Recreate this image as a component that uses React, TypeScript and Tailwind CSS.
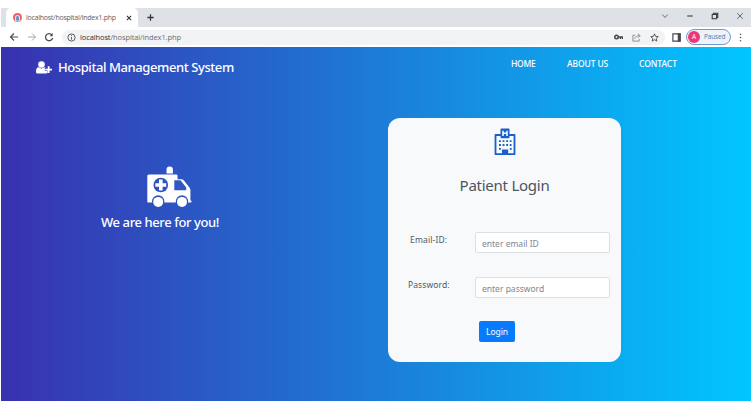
import type { ReactNode } from "react";

const chromeFont = "font-['Open_Sans','Noto_Sans',sans-serif]";
const pageFont = "font-['Noto_Sans','Open_Sans',sans-serif]";

function Favicon() {
  return (
    <svg className="size-[9px] shrink-0" viewBox="0 0 18 18">
      <circle cx="9" cy="9" r="9" fill="#ed5f61" />
      <path d="M4 15V9a5 5 0 0 1 10 0v6l-3 2H7z" fill="#dbe8f5" />
      <path d="M6 15V9a3 3 0 0 1 6 0v6z" fill="#6a9cca" />
      <path d="M9 6v9" stroke="#e05a61" strokeWidth="2" />
    </svg>
  );
}

function Stroke({ children, className, color = "#4b4f54", width = 1 }: { children: ReactNode; className: string; color?: string; width?: number }) {
  return (
    <svg className={`shrink-0 ${className}`} viewBox="0 0 10 10" fill="none" stroke={color} strokeWidth={width}>
      {children}
    </svg>
  );
}

function TabStrip() {
  return (
    <div className="flex h-[19px] items-stretch bg-[#dee1e6]">
      <div className="ml-[5px] flex w-[132px] items-center rounded-t-[5px] bg-white pl-[7px]">
        <Favicon />
        <span className="ml-[4px] w-[88px] whitespace-nowrap text-[7px] leading-[10px] tracking-[-0.25px] text-[#5d6065]">localhost/hospital/index1.php</span>
        <Stroke className="ml-[12px] size-[6px]" color="#303236" width={1.8}><path d="M1.5 1.5l7 7m0-7l-7 7" /></Stroke>
      </div>
      <div className="ml-[8px] flex items-center">
        <Stroke className="size-[9px]" color="#34373b" width={1.4}><path d="M5 1.5v7M1.5 5h7" /></Stroke>
      </div>
      <div className="ml-auto flex items-center pr-[7px] pb-[3px]">
        <Stroke className="size-[8px]"><path d="M1.5 3.2L5 6.7l3.500-3.500" /></Stroke>
        <Stroke className="ml-[17px] size-[8px]" width={1.5}><path d="M1.5 5h7" /></Stroke>
        <Stroke className="ml-[17px] size-[8px]" color="#33363a" width={1.3}><path d="M1.5 3h5.5v5.5H1.5zM3 3V1.5h5.5V7H7" /></Stroke>
        <Stroke className="ml-[17px] size-[8px]"><path d="M1.5 1.5l7 7m0-7l-7 7" /></Stroke>
      </div>
    </div>
  );
}

function Toolbar() {
  return (
    <div className="flex h-[20px] items-center bg-white pl-[8px]">
      <Stroke className="size-[10px]" width={1.2}><path d="M9 5H1.5M5 1.5L1.5 5 5 8.5" /></Stroke>
      <Stroke className="ml-[8px] size-[10px]" color="#a4a7ab"><path d="M1 5h7.5M5 1.5L8.5 5 5 8.5" /></Stroke>
      <Stroke className="ml-[7px] size-[10px]" width={1.3}><path d="M8 3A3.6 3.6 0 1 0 8.6 6" /><path d="M8.7 1v3.2H5.6z" fill="#4b4f54" stroke="none" /></Stroke>
      <div className="ml-[8px] flex h-[15px] w-[603px] items-center rounded-full bg-[#f1f3f4] pl-[5px] pr-[6px]">
        <Stroke className="size-[9px]"><circle cx="5" cy="5" r="4" /><path d="M5 4.4v3M5 2.3v1" /></Stroke>
        <span className="ml-[4px] text-[7.5px] leading-[12px] tracking-[-0.11px] whitespace-nowrap text-[#6b6e72]"><span className="text-[#303236]">localhost</span>/hospital/index1.php</span>
        <svg className="ml-auto h-[6px] w-[9px]" viewBox="0 0 18 12" fill="none" stroke="#45494e" strokeWidth="3"><circle cx="5" cy="6" r="3.5" /><path d="M8 6h9v4M13 6v4" /></svg>
        <Stroke className="ml-[9px] size-[9px]" color="#85898d"><path d="M3.5 2.5H1v6.5h7V6.5M3 6.5c.5-2.5 2-3.5 5.5-3.5M6.5.8L9.2 3 6.5 5.2" /></Stroke>
        <Stroke className="ml-[9px] size-[9px]" color="#484c51"><path d="M5 1l1.2 2.7 3 .3-2.3 2 .7 3L5 7.4 2.4 9l.7-3-2.3-2 3-.3z" /></Stroke>
      </div>
      <Stroke className="ml-[7px] size-[9px]" color="#45494e" width={1.3}><path d="M1 1h8v8H1z" /><path d="M7 1h2v8H7z" fill="#45494e" /></Stroke>
      <div className="ml-[5px] flex h-[16px] w-[45px] items-center rounded-full border border-[#6f9bd0] bg-[#edf3fb] pl-px">
        <span className="flex size-[12px] items-center justify-center rounded-full bg-[#ec3879] text-[6.5px] leading-none text-white">A</span>
        <span className="ml-[4px] text-[6.5px] leading-[10px] tracking-[-0.15px] text-[#5577a8]">Paused</span>
      </div>
      <svg className="ml-[8px] h-[9px] w-[3px]" viewBox="0 0 3 9" fill="#54585d"><circle cx="1.5" cy="1.3" r=".8" /><circle cx="1.5" cy="4.5" r=".8" /><circle cx="1.5" cy="7.7" r=".8" /></svg>
    </div>
  );
}

function UserPlusIcon() {
  return (
    <svg className="h-[13px] w-[16px]" viewBox="0 0 32 26" fill="white">
      <circle cx="11" cy="7" r="6.6" />
      <path d="M5.5 12.5Q11 17 16.5 12.5q1.8 0 3 1.4h-1.8v6h5.5v3.8Q22.5 25 20 25H3.5C1 25 0 23.5 0 21.3c0-4.5 1.5-8.8 5.5-8.8z" />
      <path d="M23.5 10.5h3.6v5H32v3.6h-4.9v5h-3.6v-5h-5v-3.6h5z" />
    </svg>
  );
}

function AmbulanceIcon() {
  return (
    <svg className="h-[42px] w-[46px]" viewBox="0 0 46 42">
      <path d="M20.5 7.6V3.8Q20.5.5 23.7.5T26.9 3.8V7.6z" fill="white" />
      <path d="M2.8 8.5h27.4q1.3 0 1.3 1.3v3.4h4q1.3 0 2.2 1l5.7 7.2q1 1 1 2.5V34.4q1.2.1 1.2 1.1T44.4 36.6H2.5q-1.2 0-1.2-1.2V10q0-1.5 1.5-1.5z" fill="white" />
      <circle cx="14.8" cy="19" r="7.3" fill="#3153bf" />
      <path d="M13 13.6h3.6v3.6h3.6v3.6h-3.6v3.6H13v-3.6H9.4v-3.6H13z" fill="white" />
      <path d="M28.3 14.2h6.2l5.7 7.3v2.7H28.3z" fill="#3157c2" />
      <circle cx="12.2" cy="35.5" r="6.2" fill="#2f50be" />
      <circle cx="12.2" cy="35.9" r="5" fill="white" />
      <circle cx="36" cy="35.5" r="6.2" fill="#2d58c4" />
      <circle cx="36" cy="35.9" r="5" fill="white" />
    </svg>
  );
}

function HospitalIcon() {
  return (
    <svg className="h-[28px] w-[22px]" viewBox="0 0 22 28">
      <path d="M1.5 7h19v19.2h-19z" fill="#f8f9fa" stroke="#1860c8" strokeWidth="1.8" strokeLinejoin="round" />
      <rect x="6.5" y=".5" width="9" height="9.8" rx="1" fill="#1860c8" />
      <path d="M9 2.7v5.2M13 2.7v5.2M9 5.3h4" stroke="white" strokeWidth="1.5" fill="none" />
      <path d="M5 13.2h12.5M5 17h12.5" stroke="#1860c8" strokeWidth="1.8" strokeDasharray="1.9 1.7" />
      <path d="M5 20.9h1.9M15.8 20.9h1.9" stroke="#1860c8" strokeWidth="1.8" />
      <path d="M8 21.5h6.2V27H8z" fill="#1860c8" />
    </svg>
  );
}

function Field({ label, placeholder, type, labelClass }: { label: string; placeholder: string; type: string; labelClass: string }) {
  return (
    <label className="flex h-[21px]">
      <span className="w-[87px] shrink-0 pl-[20px] text-[#4e5966]">
        <span className={`block pt-[2px] whitespace-nowrap text-[8.5px] leading-[12px] ${labelClass}`}>{label}</span>
      </span>
      <input type={type} placeholder={placeholder} className="h-[21px] w-[135px] rounded-[2px] border border-[#dce0e5] bg-white px-[6px] pt-px text-[8.5px] tracking-normal placeholder:text-[#7f868d] outline-none" />
    </label>
  );
}

export default function App() {
  return (
    <div className="h-[401px] w-[751px] overflow-hidden bg-white pt-[8px] pl-px">
      <header className={chromeFont}>
        <TabStrip />
        <Toolbar />
      </header>
      <div className={`h-[354px] bg-linear-to-r/srgb from-[#3931af] to-[#00c6ff] ${pageFont}`}>
        <nav className="flex h-[71px] items-start pt-[14px] pl-[35px] text-white">
          <UserPlusIcon />
          <span className="-mt-[3px] ml-[6px] w-[176px] whitespace-nowrap text-[13px] leading-[18px] font-medium tracking-[-0.42px]">Hospital Management System</span>
          <div className="-mt-[3px] ml-[277px] flex text-[8.5px] leading-[12px] font-medium whitespace-nowrap">
            <a className="w-[56px] tracking-[-0.25px]">HOME</a>
            <a className="w-[72px] tracking-[-0.1px]">ABOUT US</a>
            <a className="tracking-[-0.05px]">CONTACT</a>
          </div>
        </nav>
        <main className="flex items-start">
          <section className="ml-[99px] flex w-[120px] flex-col items-center pt-[48px] text-white">
            <div className="pl-[17px]"><AmbulanceIcon /></div>
            <p className="mt-[5px] text-[13px] leading-[18px] font-medium tracking-[-0.4px] whitespace-nowrap">We are here for you!</p>
          </section>
          <form className="ml-[168px] h-[244px] w-[233px] rounded-[12px] bg-[#f8f9fa]" onSubmit={(event) => event.preventDefault()}>
            <div className="flex justify-center pt-[10px]"><HospitalIcon /></div>
            <h1 className="mt-[18px] text-center text-[15px] leading-[22px] text-[#4a5563] tracking-[-0.25px]">Patient Login</h1>
            <div className="mt-[36px] flex flex-col gap-[24px]">
              <Field label="Email-ID:" placeholder="enter email ID" type="email" labelClass="ml-[2px] tracking-[0.15px]" />
              <Field label="Password:" placeholder="enter password" type="password" labelClass="tracking-[0.1px]" />
            </div>
            <button className="mt-[23px] ml-[91px] h-[21px] w-[36px] rounded-[2px] bg-[#087bfc] pt-px text-[8.5px] tracking-[-0.1px] text-white">Login</button>
          </form>
        </main>
      </div>
    </div>
  );
}
